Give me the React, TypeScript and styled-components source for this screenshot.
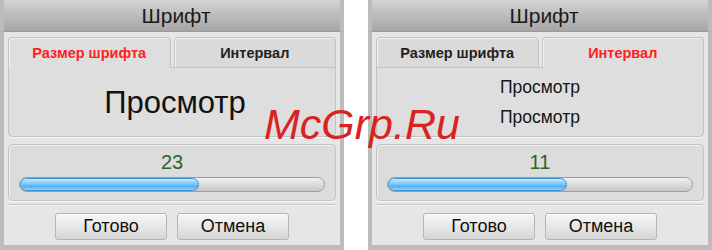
import React from 'react'
import styled, { createGlobalStyle } from 'styled-components'

const GlobalStyle = createGlobalStyle`
  html, body {
    margin: 0;
    padding: 0;
    background: #ffffff;
    font-family: "Liberation Sans", Arial, sans-serif;
  }
`

type Props = {
    activeTab: number
    value: number
    percent: number
    children: React.ReactNode
}

const tabs = ['Размер шрифта', 'Интервал']

const FontPanel = ({ activeTab, value, percent, children }: Props) => (
    <Panel>
        <TitleBar>Шрифт</TitleBar>
        <Body>
            <TabRow>
                {tabs.map((t, i) => (
                    <Tab key={t} active={i === activeTab}>{t}</Tab>
                ))}
            </TabRow>
            <Pane>{children}</Pane>
            <SliderBox>
                <Value>{value}</Value>
                <Track>
                    <Fill style={{ width: `${percent}%` }} />
                </Track>
            </SliderBox>
            <Separator />
            <ButtonRow>
                <Button type="button">Готово</Button>
                <Button type="button">Отмена</Button>
            </ButtonRow>
        </Body>
    </Panel>
)

export default function App() {
    return (
        <>
            <GlobalStyle />
            <Page>
                <FontPanel activeTab={0} value={23} percent={59}>
                    <BigPreview>Просмотр</BigPreview>
                </FontPanel>
                <FontPanel activeTab={1} value={11} percent={59}>
                    <SmallPreview>Просмотр</SmallPreview>
                    <SmallPreview>Просмотр</SmallPreview>
                </FontPanel>
                <Watermark>McGrp.Ru</Watermark>
            </Page>
        </>
    )
}

const Page = styled.div`
  position: relative;
  display: flex;
  gap: 24px;
  width: 712px;
  height: 250px;
  overflow: hidden;
`

const Panel = styled.div`
  width: 336px;
  height: 245px;
  border: 4px solid #bcbcbc;
  border-top: none;
  border-bottom-width: 5px;
  display: flex;
  flex-direction: column;
  background: #e6e6e6;
`

const TitleBar = styled.div`
  height: 32px;
  flex: none;
  display: flex;
  align-items: center;
  justify-content: center;
  padding-left: 8px;
  box-sizing: border-box;
  font-size: 21px;
  color: #1b1b1b;
  background: linear-gradient(#d6d6d6, #c0c0c0 40%, #a6a6a6);
  border-bottom: 1px solid #999;
`

const Body = styled.div`
  flex: 1;
  display: flex;
  flex-direction: column;
  padding: 4px 4px 0;
`

const TabRow = styled.div`
  display: flex;
  gap: 3px;
  margin-bottom: -1px;
  padding-top: 1px;
`

const Tab = styled.div<{ active: boolean }>`
  position: relative;
  z-index: ${({ active }) => (active ? 2 : 1)};
  flex: 1;
  height: 31px;
  box-sizing: border-box;
  display: flex;
  align-items: center;
  justify-content: center;
  font-size: 14.5px;
  font-weight: bold;
  color: ${({ active }) => (active ? '#ff2020' : '#222')};
  background: ${({ active }) => (active ? '#dedede' : '#dadada')};
  border: 1px solid #c2c2c2;
  border-bottom-color: ${({ active }) => (active ? '#dedede' : '#c2c2c2')};
  border-radius: 4px 4px 0 0;
  box-shadow: inset 1px 1px 0 #f2f2f2;
`

const Pane = styled.div`
  height: 70px;
  box-sizing: border-box;
  display: flex;
  flex-direction: column;
  align-items: center;
  justify-content: center;
  gap: 10px;
  background: #dedede;
  border: 1px solid #c2c2c2;
  border-radius: 0 0 4px 4px;
  box-shadow: 0 1px 0 #f4f4f4;
`

const BigPreview = styled.div`
  font-size: 31px;
  color: #111;
  padding-top: 2px;
  padding-left: 6px;
`

const SmallPreview = styled.div`
  font-size: 17.5px;
  color: #151515;
  line-height: 20px;
`

const SliderBox = styled.div`
  margin-top: 7px;
  height: 57px;
  box-sizing: border-box;
  padding: 5px 10px 0;
  background: #dcdcdc;
  border: 1px solid #c4c4c4;
  border-radius: 4px;
  box-shadow: inset 1px 1px 0 #eeeeee, 0 1px 0 #f4f4f4;
`

const Value = styled.div`
  text-align: center;
  font-size: 20px;
  line-height: 24px;
  color: #2a662a;
`

const Track = styled.div`
  margin-top: 3px;
  height: 15px;
  box-sizing: border-box;
  border: 1px solid #9c9c9c;
  border-radius: 8px;
  background: linear-gradient(#f0f0f0, #d8d8d8 60%, #c8c8c8);
  overflow: hidden;
  display: flex;
`

const Fill = styled.div`
  height: 100%;
  box-sizing: border-box;
  border-radius: 8px;
  border: 1px solid #3f8fd6;
  background: linear-gradient(#c6eaff, #7cc8ff 45%, #56b0f2 70%, #93d4ff);
`

const Separator = styled.div`
  margin-top: 3px;
  height: 1px;
  background: #c8c8c8;
  border-bottom: 1px solid #f4f4f4;
`

const ButtonRow = styled.div`
  display: flex;
  justify-content: center;
  gap: 10px;
  margin-top: 7px;
`

const Button = styled.button`
  width: 112px;
  height: 27px;
  padding: 0;
  font-family: "Liberation Sans", Arial, sans-serif;
  font-size: 18px;
  color: #111;
  background: linear-gradient(#f6f6f6, #e4e4e4 60%, #d6d6d6);
  border: 1px solid #b4b4b4;
  border-radius: 3px;
  box-shadow: inset 0 1px 0 #ffffff;
`

const Watermark = styled.div`
  position: absolute;
  left: 264px;
  top: 100px;
  font-size: 43px;
  font-style: italic;
  color: #d92222;
  pointer-events: none;
  z-index: 5;
`
